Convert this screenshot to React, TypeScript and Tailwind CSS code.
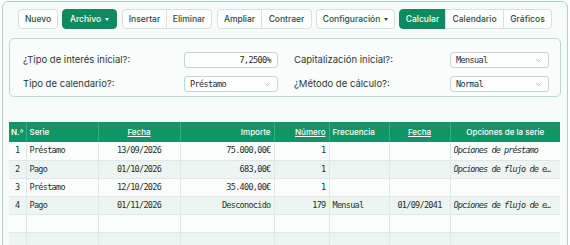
import { ChevronDown } from 'lucide-react'

const UI = { fontFamily: 'Inter, "Noto Sans", sans-serif' }
const MONO = { fontFamily: '"DejaVu Sans Mono", "Liberation Mono", monospace' }

type Row = {
  n?: number
  serie?: string
  fecha?: string
  importe?: string
  numero?: string
  frec?: string
  fecha2?: string
  opciones?: string
}

const ROWS: Row[] = [
  { n: 1, serie: 'Préstamo', fecha: '13/09/2026', importe: '75.000,00€', numero: '1', opciones: 'Opciones de préstamo' },
  { n: 2, serie: 'Pago', fecha: '01/10/2026', importe: '683,00€', numero: '1', opciones: 'Opciones de flujo de efectivo' },
  { n: 3, serie: 'Préstamo', fecha: '12/10/2026', importe: '35.400,00€', numero: '1' },
  { n: 4, serie: 'Pago', fecha: '01/11/2026', importe: 'Desconocido', numero: '179', frec: 'Mensual', fecha2: '01/09/2041', opciones: 'Opciones de flujo de efectivo' },
  {},
  {},
]

function Caret() {
  return <span className="ml-[4px] h-0 w-0 border-x-[2.5px] border-t-[3px] border-x-transparent border-t-current" />
}

function Btn({ label, active, caret, cls = '' }: { label: string; active?: boolean; caret?: boolean; cls?: string }) {
  return (
    <button
      className={`flex h-[20px] shrink-0 items-center justify-center border text-[8.5px] font-medium ${
        active ? 'border-[#0f8a5e] bg-[#0f8a5e] text-white' : 'border-[#cfe5dd] bg-white text-[#2f4a40]'
      } ${cls}`}
    >
      {label}
      {caret && <Caret />}
    </button>
  )
}

function Select({ value, w }: { value: string; w: string }) {
  return (
    <div className={`flex h-[16px] ${w} items-center justify-between rounded-[3px] border border-[#b9ddd0] bg-white pl-[5px] pr-[5px]`}>
      <span className="text-[8.5px] tracking-[-0.6px] text-[#1f2d28]" style={MONO}>{value}</span>
      <ChevronDown size={9} strokeWidth={1.5} className="text-[#7b8a85]" />
    </div>
  )
}

export default function App() {
  const td = 'h-[18px] border-r border-[#dde9e5] px-[3px] text-[8.5px] tracking-[-0.7px] text-[#23302b] whitespace-nowrap overflow-hidden'
  const th = 'border-r border-[#3aaa82] px-[3px] font-medium'
  return (
    <div className="h-[245px] w-[570px] overflow-hidden bg-white" style={UI}>
      <div className="ml-[2px] mt-[1px] h-[260px] w-[566px] rounded-[6px] border border-[#a6d8c7] bg-[#f6faf9] px-[6px] pt-[7px]">
        {/* toolbar */}
        <div className="flex items-center pl-[9px]">
          <Btn label="Nuevo" cls="w-[40px] rounded-[4px]" />
          <Btn label="Archivo" active caret cls="ml-[4px] w-[55px] rounded-[4px]" />
          <div className="ml-[5px] flex">
            <Btn label="Insertar" cls="w-[45px] rounded-l-[4px]" />
            <Btn label="Eliminar" cls="-ml-px w-[46px] rounded-r-[4px]" />
          </div>
          <div className="ml-[5px] flex">
            <Btn label="Ampliar" cls="w-[45px] rounded-l-[4px]" />
            <Btn label="Contraer" cls="-ml-px w-[51px] rounded-r-[4px]" />
          </div>
          <Btn label="Configuración" caret cls="ml-[4px] w-[79px] rounded-[4px]" />
          <div className="ml-[4px] flex">
            <Btn label="Calcular" active cls="w-[47px] rounded-l-[4px]" />
            <Btn label="Calendario" cls="-ml-px w-[59px]" />
            <Btn label="Gráficos" cls="-ml-px w-[49px] rounded-r-[4px]" />
          </div>
        </div>

        {/* form */}
        <div className="mt-[9px] grid grid-cols-2 gap-x-4 gap-y-[8px] rounded-[5px] border border-[#b6ddd0] bg-[#f9fcfb] pb-[4px] pl-[13px] pr-[11px] pt-[13px] text-[9.5px] text-[#2b3a35]">
          <div className="flex items-center justify-between">
            <span>¿Tipo de interés inicial?:</span>
            <div className="flex h-[16px] w-[94px] items-center justify-end rounded-[3px] border border-[#b9ddd0] bg-white pr-[6px]">
              <span className="text-[8.5px] tracking-[-0.6px] text-[#1f2d28]" style={MONO}>7,2500%</span>
            </div>
          </div>
          <div className="flex items-center justify-between">
            <span>Capitalización inicial?:</span>
            <Select value="Mensual" w="w-[99px]" />
          </div>
          <div className="flex items-center justify-between">
            <span>Tipo de calendario?:</span>
            <Select value="Préstamo" w="w-[94px]" />
          </div>
          <div className="flex items-center justify-between">
            <span>¿Método de cálculo?:</span>
            <Select value="Normal" w="w-[99px]" />
          </div>
        </div>

        {/* table */}
        <table className="mt-[25px] w-[551px] table-fixed border-collapse">
          <colgroup>
            <col className="w-[17px]" />
            <col className="w-[72px]" />
            <col className="w-[82px]" />
            <col className="w-[94px]" />
            <col className="w-[55px]" />
            <col className="w-[60px]" />
            <col className="w-[61px]" />
            <col className="w-[110px]" />
          </colgroup>
          <thead>
            <tr className="h-[20px] bg-[#129566] text-[8px] text-white">
              <th className="border-r border-[#3aaa82] px-[2px] text-left font-semibold">N.º</th>
              <th className={`${th} text-left`}>Serie</th>
              <th className={`${th} text-center underline`}>Fecha</th>
              <th className={`${th} text-right`}>Importe</th>
              <th className={`${th} text-right underline`}>Número</th>
              <th className={`${th} text-left`}>Frecuencia</th>
              <th className={`${th} text-center underline`}>Fecha</th>
              <th className="px-[3px] text-center font-medium">Opciones de la serie</th>
            </tr>
          </thead>
          <tbody style={MONO}>
            {ROWS.map((r, i) => (
              <tr key={i} className={`border-b border-[#dde9e5] ${i % 2 === 0 ? 'bg-[#fbfdfc]' : 'bg-[#eef4f2]'}`}>
                <td className={`${td} text-center`}>{r.n}</td>
                <td className={td}>{r.serie}</td>
                <td className={`${td} text-center`}>{r.fecha}</td>
                <td className={`${td} text-right`}>{r.importe}</td>
                <td className={`${td} text-right`}>{r.numero}</td>
                <td className={td}>{r.frec}</td>
                <td className={`${td} text-center`}>{r.fecha2}</td>
                <td className={`${td} border-r-0 italic`}>
                  <div className="w-[102px] truncate tracking-[-0.9px]">{r.opciones}</div>
                </td>
              </tr>
            ))}
          </tbody>
        </table>
      </div>
    </div>
  )
}
